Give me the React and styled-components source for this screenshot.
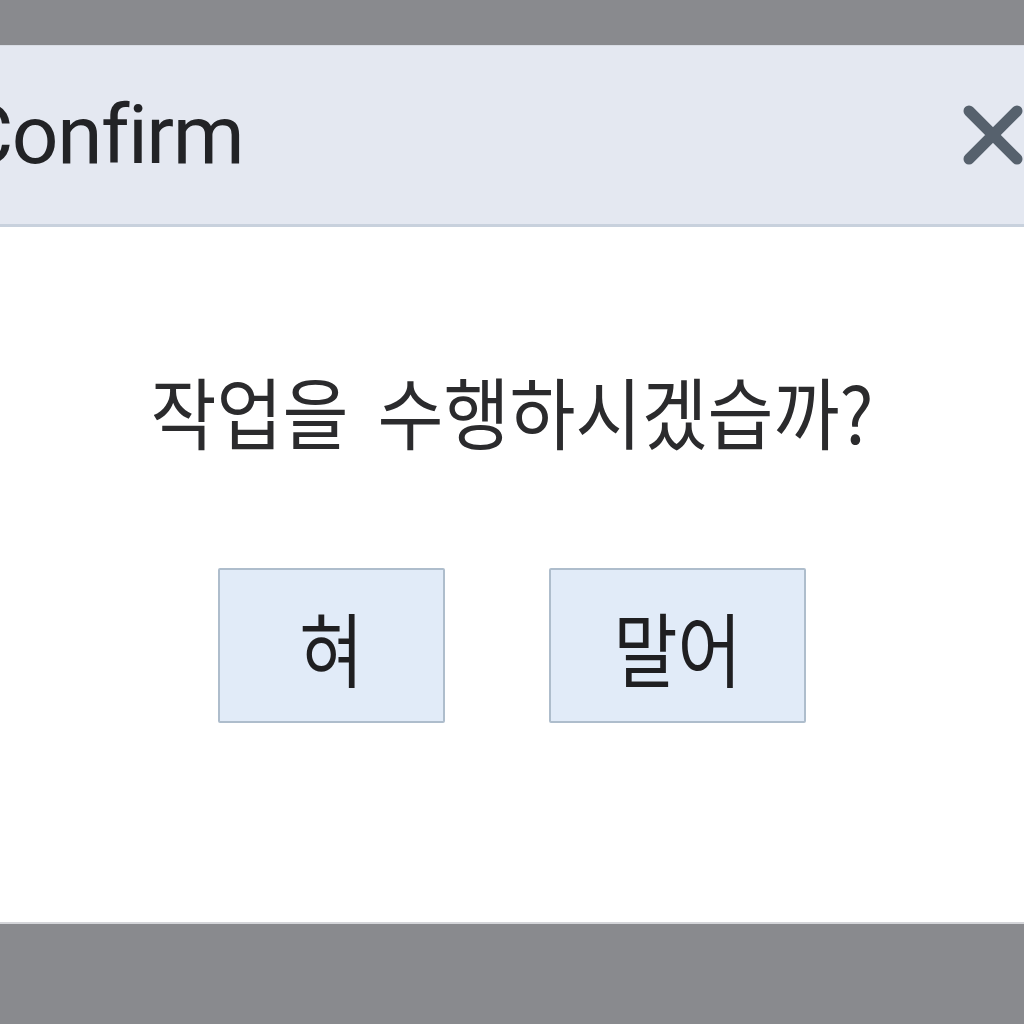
import React from "react";
import styled, { createGlobalStyle } from "styled-components";

const GlobalStyle = createGlobalStyle`
  html, body {
    margin: 0;
    padding: 0;
    background: #898a8e;
  }
  #root {
    height: 1024px;
    overflow: hidden;
  }
`;

const Backdrop = styled.div`
  height: 1024px;
  padding-top: 45px;
  box-sizing: border-box;
  overflow: hidden;
  background: #898a8e;
`;

const Dialog = styled.div`
  width: 1104px;
  height: 879px;
  margin-left: -40px;
  display: flex;
  flex-direction: column;
  background: #ffffff;
  border-top: 1px solid #d9dde5;
  border-bottom: 2px solid #d4d5d9;
  box-sizing: border-box;
`;

const Header = styled.div`
  height: 181px;
  flex: none;
  display: flex;
  align-items: center;
  justify-content: space-between;
  padding: 0 40px 0 0;
  background: #e4e8f1;
  border-bottom: 3px solid #c8d1dd;
  box-sizing: border-box;
`;

const Title = styled.h1`
  margin: 0;
  font-family: Roboto, "Liberation Sans", sans-serif;
  font-weight: 400;
  font-size: 82px;
  letter-spacing: -1.5px;
  line-height: 1;
  color: #222326;
`;

const CloseButton = styled.button`
  width: 62px;
  height: 62px;
  padding: 0;
  border: 0;
  background: transparent;
  display: flex;
  align-items: center;
  justify-content: center;
  cursor: pointer;
`;

const Body = styled.div`
  flex: 1;
  display: flex;
  flex-direction: column;
  align-items: center;
  padding-top: 144px;
`;

/* the reference glyphs are narrower than Noto's square hangul */
const Message = styled.p`
  margin: 0;
  font-family: "Noto Sans CJK KR", "Noto Sans", sans-serif;
  font-size: 78px;
  word-spacing: 14px;
  line-height: 1;
  color: #2b2b2d;
  transform: scaleX(0.92);
`;

const Actions = styled.div`
  display: flex;
  gap: 104px;
  margin-top: 119px;
`;

const ActionButton = styled.button`
  width: ${(p) => p.$width}px;
  height: 155px;
  padding: 0;
  display: flex;
  align-items: center;
  justify-content: center;
  background: #e1ebf8;
  border: 2px solid #aebdcc;
  border-radius: 2px;
  cursor: pointer;
`;

const Label = styled.span`
  display: inline-block;
  font-family: "Noto Sans CJK KR", "Noto Sans", sans-serif;
  font-size: 81px;
  line-height: 1;
  color: #1f1f21;
  transform: scaleX(0.86);
`;

const CloseIcon = () => (
  <svg width="62" height="62" viewBox="0 0 62 62">
    <path
      d="M7 7 L55 55 M55 7 L7 55"
      stroke="#56616d"
      strokeWidth="11"
      strokeLinecap="round"
      fill="none"
    />
  </svg>
);

const App = () => {
  return (
    <>
      <GlobalStyle />
      <Backdrop>
        <Dialog>
          <Header>
            <Title>Confirm</Title>
            <CloseButton aria-label="close">
              <CloseIcon />
            </CloseButton>
          </Header>
          <Body>
            <Message>작업을 수행하시겠습까?</Message>
            <Actions>
              <ActionButton $width={227}>
                <Label>혀</Label>
              </ActionButton>
              <ActionButton $width={257}>
                <Label>말어</Label>
              </ActionButton>
            </Actions>
          </Body>
        </Dialog>
      </Backdrop>
    </>
  );
};

export default App;
